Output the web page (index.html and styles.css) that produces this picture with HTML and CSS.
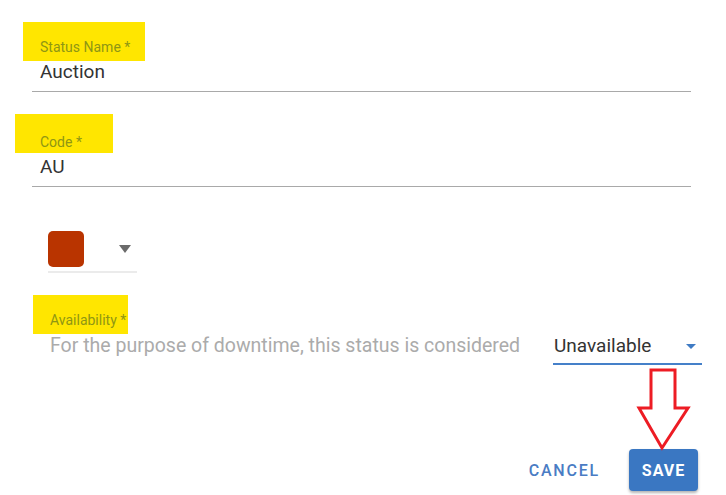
FILE: index.html
```html
<!DOCTYPE html>
<html>
<head>
<meta charset="utf-8">
<link rel="stylesheet" href="styles.css">
</head>
<body>
<div class="dialog">
  <div class="field field-name">
    <label class="label"><span class="hl hl-name"></span><span class="label-text">Status Name *</span></label>
    <div class="value">Auction</div>
  </div>
  <div class="field field-code">
    <label class="label"><span class="hl hl-code"></span><span class="label-text">Code *</span></label>
    <div class="value">AU</div>
  </div>
  <div class="color-picker">
    <div class="swatch"></div>
    <span class="caret-gray"></span>
  </div>
  <div class="availability">
    <label class="label"><span class="hl hl-avail"></span><span class="label-text">Availability *</span></label>
    <div class="avail-row">
      <span class="avail-text">For the purpose of downtime, this status is considered</span>
      <div class="select">
        <span class="select-value">Unavailable</span>
        <span class="caret-blue"></span>
      </div>
    </div>
  </div>
  <div class="actions">
    <button class="btn btn-cancel">CANCEL</button>
    <button class="btn btn-save">SAVE</button>
  </div>
  <svg class="arrow" width="60" height="90" viewBox="636 366 60 90">
    <polygon points="651,370 675,370 675,408 688,408 662,448 639,408 651,408" fill="none" stroke="#ed1c24" stroke-width="3" stroke-linejoin="miter"/>
  </svg>
</div>
</body>
</html>
```
FILE: styles.css
```css
* { box-sizing: border-box; }
html, body { margin: 0; padding: 0; background: #fff; }
body { font-family: Roboto, "Liberation Sans", sans-serif; width: 726px; height: 495px; overflow: hidden; }
.dialog { position: relative; padding: 39px 35px 0 32px; }

.field { border-bottom: 1px solid #a9a9a9; padding-bottom: 7px; }
.field-code { margin-top: 42px; }
.label { position: relative; display: block; font-size: 14px; line-height: 16px; color: #8f9614; padding-left: 8px; }
.label-text { position: relative; }
.hl { position: absolute; background: #ffe600; }
.hl-name { left: -9px; top: -17px; width: 122px; height: 39px; }
.hl-code { left: -17px; top: -20px; width: 98px; height: 39px; }
.hl-avail { left: -17px; top: -17px; width: 95px; height: 39px; }
.value { margin-top: 5px; font-size: 19px; line-height: 24px; color: #333; padding-left: 8px; }

.color-picker { margin: 44px 0 0 16px; width: 89px; display: flex; align-items: center; border-bottom: 2px solid #ebebeb; padding-bottom: 4px; }
.swatch { width: 36px; height: 36px; border-radius: 5px; background: #b93400; }
.caret-gray { margin-left: auto; margin-right: 6px; width: 0; height: 0; border-left: 6px solid transparent; border-right: 6px solid transparent; border-top: 8px solid #6b6b6b; }

.availability { margin: 39px -11px 0 18px; }
.availability .label { padding-left: 0; }
.avail-row { margin-top: 7px; display: flex; align-items: flex-start; }
.avail-text { font-size: 19.5px; line-height: 22px; color: #ababab; }
.select { margin-left: auto; width: 149px; display: flex; align-items: center; border-bottom: 2px solid #4580c9; padding: 0 6px 6px 1px; }
.select-value { font-size: 19px; line-height: 22px; color: #333; }
.caret-blue { margin-left: auto; width: 0; height: 0; border-left: 5px solid transparent; border-right: 5px solid transparent; border-top: 5px solid #3f7bc4; }

.actions { display: flex; justify-content: flex-end; align-items: center; margin: 84px -7px 0 0; gap: 29px; }
.btn { font-family: Roboto, "Liberation Sans", sans-serif; border: none; background: none; padding: 0; cursor: pointer; }
.btn-cancel { font-size: 16px; font-weight: 500; letter-spacing: 1.8px; color: #4a7cc4; }
.btn-save { width: 69px; height: 42px; border-radius: 4px; background: #3a77c2; color: #fff; font-size: 16px; font-weight: 700; letter-spacing: 1px; box-shadow: 0 2px 3px rgba(0,0,0,0.3); }

.arrow { position: absolute; left: 636px; top: 366px; overflow: visible; }
```
